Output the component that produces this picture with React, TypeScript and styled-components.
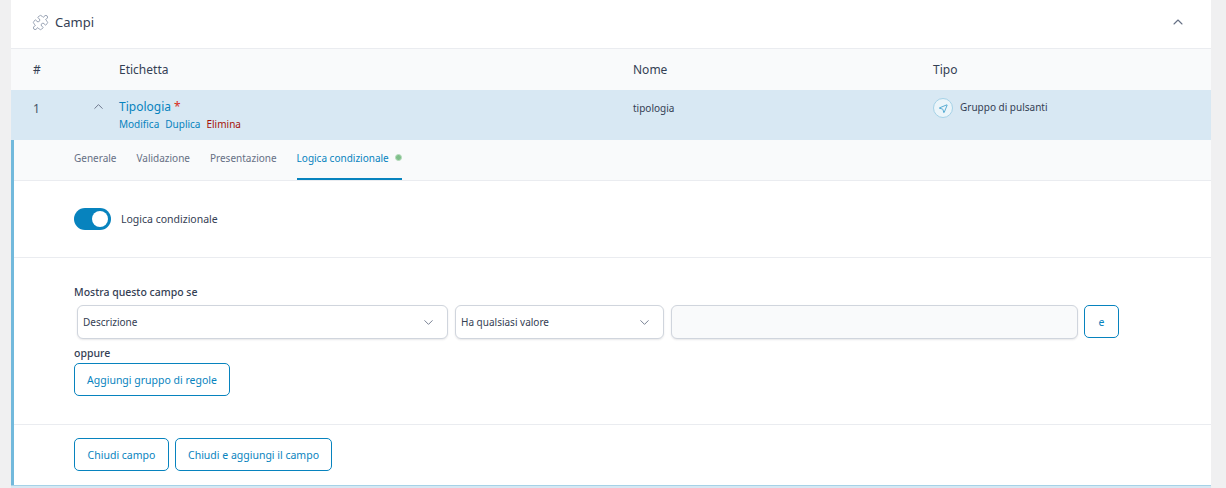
import React from "react";
import styled, { createGlobalStyle } from "styled-components";
import { ChevronUp, ChevronDown, Puzzle, MousePointer2 } from "lucide-react";

const Global = createGlobalStyle`
  html, body { margin: 0; padding: 0; background: #f0f0f1; overflow: hidden; }
  body { font-family: "Noto Sans", "Open Sans", sans-serif; color: #344054; }
  * { box-sizing: border-box; }
`;
const Page = styled.div`
  width: 1226px; height: 488px; padding: 0 15px 0 11px; overflow: hidden;
`;
const Card = styled.div`
  background: #fff; height: 488px;
`;
const Header = styled.div`
  height: 49px; display: flex; align-items: center; justify-content: space-between;
  padding: 0 25px 4px 21px; border-bottom: 1px solid #eaecf0;
`;
const Title = styled.div`
  display: flex; align-items: center; gap: 6px; font-size: 13px; color: #344054;
  svg { color: #98a2b3; }
`;
const Grid = `
  display: grid; grid-template-columns: 59px 27px 514px 300px 1fr;
`;
const THead = styled.div`
  ${Grid}
  height: 41px; align-items: center; background: #f9fafb; padding-left: 22px;
  font-size: 12px; color: #344054;
`;
const ActiveRow = styled.div`
  ${Grid}
  height: 50px; background: #d8e8f3; padding-left: 22px; padding-top: 10px;
  font-size: 12px; color: #475467;
`;
const LabelCell = styled.div`
  margin-top: -1px;
`;
const FieldLink = styled.div`
  font-size: 12px; line-height: 16px; color: #0783be;
  span { color: #d92d20; }
`;
const Actions = styled.div`
  display: flex; gap: 6px; font-size: 10px; line-height: 14px; margin-top: 2px;
`;
const Action = styled.span<{ $danger?: boolean }>`
  color: ${p => (p.$danger ? "#a5120a" : "#0783be")};
`;
const Name = styled.div`
  font-size: 10px; line-height: 16px; color: #344054;
`;
const TypeCell = styled.div`
  display: flex; align-items: flex-start; gap: 7px; font-size: 10px; line-height: 16px; margin-top: -2px; color: #344054;
`;
const TypeIcon = styled.div`
  width: 20px; height: 20px; border-radius: 50%; background: #ebf5fa; border: 1px solid #a5d2e7;
  display: flex; align-items: center; justify-content: center; color: #0783be;
  & + span { margin-top: 1px; }
`;
const Chevron = styled.div`
  color: #667085; margin-top: -1px; margin-left: -1px;
`;
const Panel = styled.div`
  border-left: 3px solid #72b9dc;
`;
const Tabs = styled.div`
  height: 41px; background: #f9fafb; border-bottom: 1px solid #eaecf0;
  display: flex; gap: 20px; padding-left: 60px;
`;
const Tab = styled.div<{ $active?: boolean }>`
  height: 40px; display: flex; align-items: center; gap: 6px; font-size: 10px; padding-bottom: 2px;
  color: ${p => (p.$active ? "#0783be" : "#667085")};
  border-bottom: 2px solid ${p => (p.$active ? "#0783be" : "transparent")};
`;
const Dot = styled.i`
  width: 7px; height: 7px; border-radius: 50%; background: #7fbf8a; border: 1px solid #b7dcbd; margin-bottom: 2px; display: block;
`;
const ToggleSection = styled.div`
  height: 77px; border-bottom: 1px solid #eaecf0; display: flex; align-items: center; gap: 10px;
  padding: 0 0 0 60px;
`;
const Toggle = styled.div`
  width: 37px; height: 22px; border-radius: 11px; background: #0783be; padding: 3px; display: flex; justify-content: flex-end;
`;
const Knob = styled.div`
  width: 16px; height: 16px; border-radius: 50%; background: #fff;
`;
const ToggleLabel = styled.div`
  font-size: 10.5px; color: #344054;
`;
const Conditions = styled.div`
  height: 167px; border-bottom: 1px solid #eaecf0; padding: 27px 0 0 60px;
`;
const Strong = styled.div`
  font-size: 10.5px; line-height: 14px; font-weight: 500; color: #344054;
`;
const RuleRow = styled.div`
  display: flex; gap: 7px; margin: 6px 0 7px 3px; height: 34px;
`;
const Select = styled.div<{ $w: number }>`
  width: ${p => p.$w}px; height: 34px; border: 1px solid #d0d5dd; border-radius: 6px; background: #fff;
  box-shadow: 0 1px 2px rgba(16,24,40,.1); display: flex; align-items: center; justify-content: space-between;
  padding: 0 11px 0 5px; font-size: 10px; color: #344054;
  svg { color: #667085; }
`;
const Disabled = styled.div`
  width: 407px; height: 34px; border: 1px solid #d0d5dd; border-radius: 6px; background: #f9fafb;
  box-shadow: 0 1px 2px rgba(16,24,40,.1);
`;
const Button = styled.div<{ $w: number; $ml?: number }>`
  width: ${p => p.$w}px; height: 33px; border: 1px solid #0783be; border-radius: 5px; background: #fff;
  display: flex; align-items: center; justify-content: center; font-size: 10.5px; color: #0783be;
  margin-left: ${p => p.$ml ?? 0}px;
`;
const Or = styled.div`
  font-size: 10.5px; line-height: 14px; font-weight: 500; color: #344054; margin-bottom: 3px;
`;
const Footer = styled.div`
  height: 60px; display: flex; gap: 6px; padding: 13px 0 0 60px;
`;
const Next = styled.div`
  height: 4px; border-top: 1px solid #a5d2e7; background: #d8e8f3; margin-left: -3px;
`;

export default function App() {
  return (
    <Page>
      <Global />
      <Card>
        <Header>
          <Title><Puzzle size={17} strokeWidth={1.4} />Campi</Title>
          <ChevronUp size={16} color="#667085" strokeWidth={1.6} />
        </Header>
        <THead>
          <div>#</div>
          <div />
          <div>Etichetta</div>
          <div>Nome</div>
          <div>Tipo</div>
        </THead>
        <ActiveRow>
          <div>1</div>
          <Chevron><ChevronUp size={15} strokeWidth={1.5} /></Chevron>
          <LabelCell>
            <FieldLink>Tipologia <span>*</span></FieldLink>
            <Actions>
              <Action>Modifica</Action>
              <Action>Duplica</Action>
              <Action $danger>Elimina</Action>
            </Actions>
          </LabelCell>
          <Name>tipologia</Name>
          <TypeCell>
            <TypeIcon><MousePointer2 size={11} strokeWidth={1.4} style={{ transform: "scaleX(-1)" }} /></TypeIcon>
            <span>Gruppo di pulsanti</span>
          </TypeCell>
        </ActiveRow>
        <Panel>
          <Tabs>
            <Tab>Generale</Tab>
            <Tab>Validazione</Tab>
            <Tab>Presentazione</Tab>
            <Tab $active>Logica condizionale <Dot /></Tab>
          </Tabs>
          <ToggleSection>
            <Toggle><Knob /></Toggle>
            <ToggleLabel>Logica condizionale</ToggleLabel>
          </ToggleSection>
          <Conditions>
            <Strong>Mostra questo campo se</Strong>
            <RuleRow>
              <Select $w={371}>Descrizione<ChevronDown size={15} strokeWidth={1.4} /></Select>
              <Select $w={209}>Ha qualsiasi valore<ChevronDown size={15} strokeWidth={1.4} /></Select>
              <Disabled />
              <Button $w={35} $ml={-1}>e</Button>
            </RuleRow>
            <Or>oppure</Or>
            <Button $w={156}>Aggiungi gruppo di regole</Button>
          </Conditions>
          <Footer>
            <Button $w={95}>Chiudi campo</Button>
            <Button $w={157}>Chiudi e aggiungi il campo</Button>
          </Footer>
          <Next />
        </Panel>
      </Card>
    </Page>
  );
}
